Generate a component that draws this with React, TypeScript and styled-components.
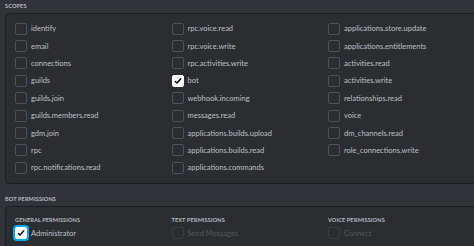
import * as React from "react";
import styled, { createGlobalStyle } from "styled-components";

const GlobalStyle = createGlobalStyle`
    html, body {
        margin: 0;
        padding: 0;
        overflow: hidden;
        background: #313338;
    }
`

const Page = styled.div`
    width: 474px;
    height: 246px;
    overflow: hidden;
    background: #313338;
    font-family: Lato, "Noto Sans", sans-serif;
    color: #b5bac1;
`

const SectionTitle = styled.div<{ $first?: boolean }>`
    height: 11px;
    line-height: 11px;
    margin: ${props => props.$first ? "0" : "9px"} 0 2px 5px;
    font-size: 5.6px;
    font-weight: 700;
    letter-spacing: 0.1px;
    text-transform: uppercase;
    color: #b5bac1;
`

const Panel = styled.div<{ $padTop: number }>`
    margin: 0 -20px 0 5px;
    border: 1px solid #1e1f22;
    border-radius: 4px;
    background: #2b2d31;
    padding: ${props => props.$padTop}px 0 6px 9px;
`

const Grid = styled.div`
    display: grid;
    grid-template-columns: 156.5px 156.5px 156.5px;
    grid-auto-flow: column;
    grid-template-rows: repeat(9, 17.4px);
`

const Columns = styled.div`
    display: grid;
    grid-template-columns: 156.5px 156.5px 156.5px;
`

const Column = styled.div`
    display: flex;
    flex-direction: column;
`

const GroupTitle = styled.div`
    height: 10px;
    line-height: 10px;
    font-size: 5.6px;
    font-weight: 700;
    letter-spacing: 0.1px;
    text-transform: uppercase;
    color: #b5bac1;
`

const Row = styled.label<{ $disabled?: boolean }>`
    display: flex;
    align-items: center;
    gap: 4px;
    height: 17.4px;
    font-size: 7.5px;
    color: ${props => props.$disabled ? "#55575e" : "#bcc0c6"};
    white-space: nowrap;
`

const Box = styled.span<{ $checked?: boolean; $focused?: boolean; $disabled?: boolean }>`
    box-sizing: border-box;
    width: 12px;
    height: 12px;
    flex: none;
    display: flex;
    align-items: center;
    justify-content: center;
    border-radius: 2px;
    border: 1px solid ${props => props.$checked ? "#ffffff" : props.$disabled ? "#3a3c42" : "#4e5058"};
    background: ${props => props.$checked ? "#ffffff" : "transparent"};
    box-shadow: ${props => props.$focused ? "0 0 0 2px #00a8fc" : "none"};
`

function Check() {
    return (
        <svg width="8" height="8" viewBox="0 0 8 8">
            <path d="M1.3 4.4 L3 6 L6.8 1.8" fill="none" stroke="#000" strokeWidth="1.4" strokeLinecap="round" strokeLinejoin="round" />
        </svg>
    )
}

interface Item {
    label: string
    checked?: boolean
    focused?: boolean
    disabled?: boolean
}

function Option(props: Item) {
    return (
        <Row $disabled={props.disabled}>
            <Box $checked={props.checked} $focused={props.focused} $disabled={props.disabled}>
                {props.checked && <Check />}
            </Box>
            {props.label}
        </Row>
    )
}

const scopes: Item[] = [
    { label: "identify" },
    { label: "email" },
    { label: "connections" },
    { label: "guilds" },
    { label: "guilds.join" },
    { label: "guilds.members.read" },
    { label: "gdm.join" },
    { label: "rpc" },
    { label: "rpc.notifications.read" },
    { label: "rpc.voice.read" },
    { label: "rpc.voice.write" },
    { label: "rpc.activities.write" },
    { label: "bot", checked: true },
    { label: "webhook.incoming" },
    { label: "messages.read" },
    { label: "applications.builds.upload" },
    { label: "applications.builds.read" },
    { label: "applications.commands" },
    { label: "applications.store.update" },
    { label: "applications.entitlements" },
    { label: "activities.read" },
    { label: "activities.write" },
    { label: "relationships.read" },
    { label: "voice" },
    { label: "dm_channels.read" },
    { label: "role_connections.write" },
]

const permissions: { title: string, items: Item[] }[] = [
    {
        title: "General Permissions",
        items: [
            { label: "Administrator", checked: true, focused: true },
        ],
    },
    {
        title: "Text Permissions",
        items: [
            { label: "Send Messages", disabled: true },
        ],
    },
    {
        title: "Voice Permissions",
        items: [
            { label: "Connect", disabled: true },
        ],
    },
]

function App() {
    return (
        <Page>
            <GlobalStyle />
            <SectionTitle $first>Scopes</SectionTitle>
            <Panel $padTop={6}>
                <Grid>
                    {scopes.map((item, index) => <Option key={index} {...item} />)}
                </Grid>
            </Panel>
            <SectionTitle>Bot Permissions</SectionTitle>
            <Panel $padTop={8}>
                <Columns>
                    {permissions.map((group, index) => (
                        <Column key={index}>
                            <GroupTitle>{group.title}</GroupTitle>
                            {group.items.map((item, i) => <Option key={i} {...item} />)}
                        </Column>
                    ))}
                </Columns>
            </Panel>
        </Page>
    )
}

export default App;
